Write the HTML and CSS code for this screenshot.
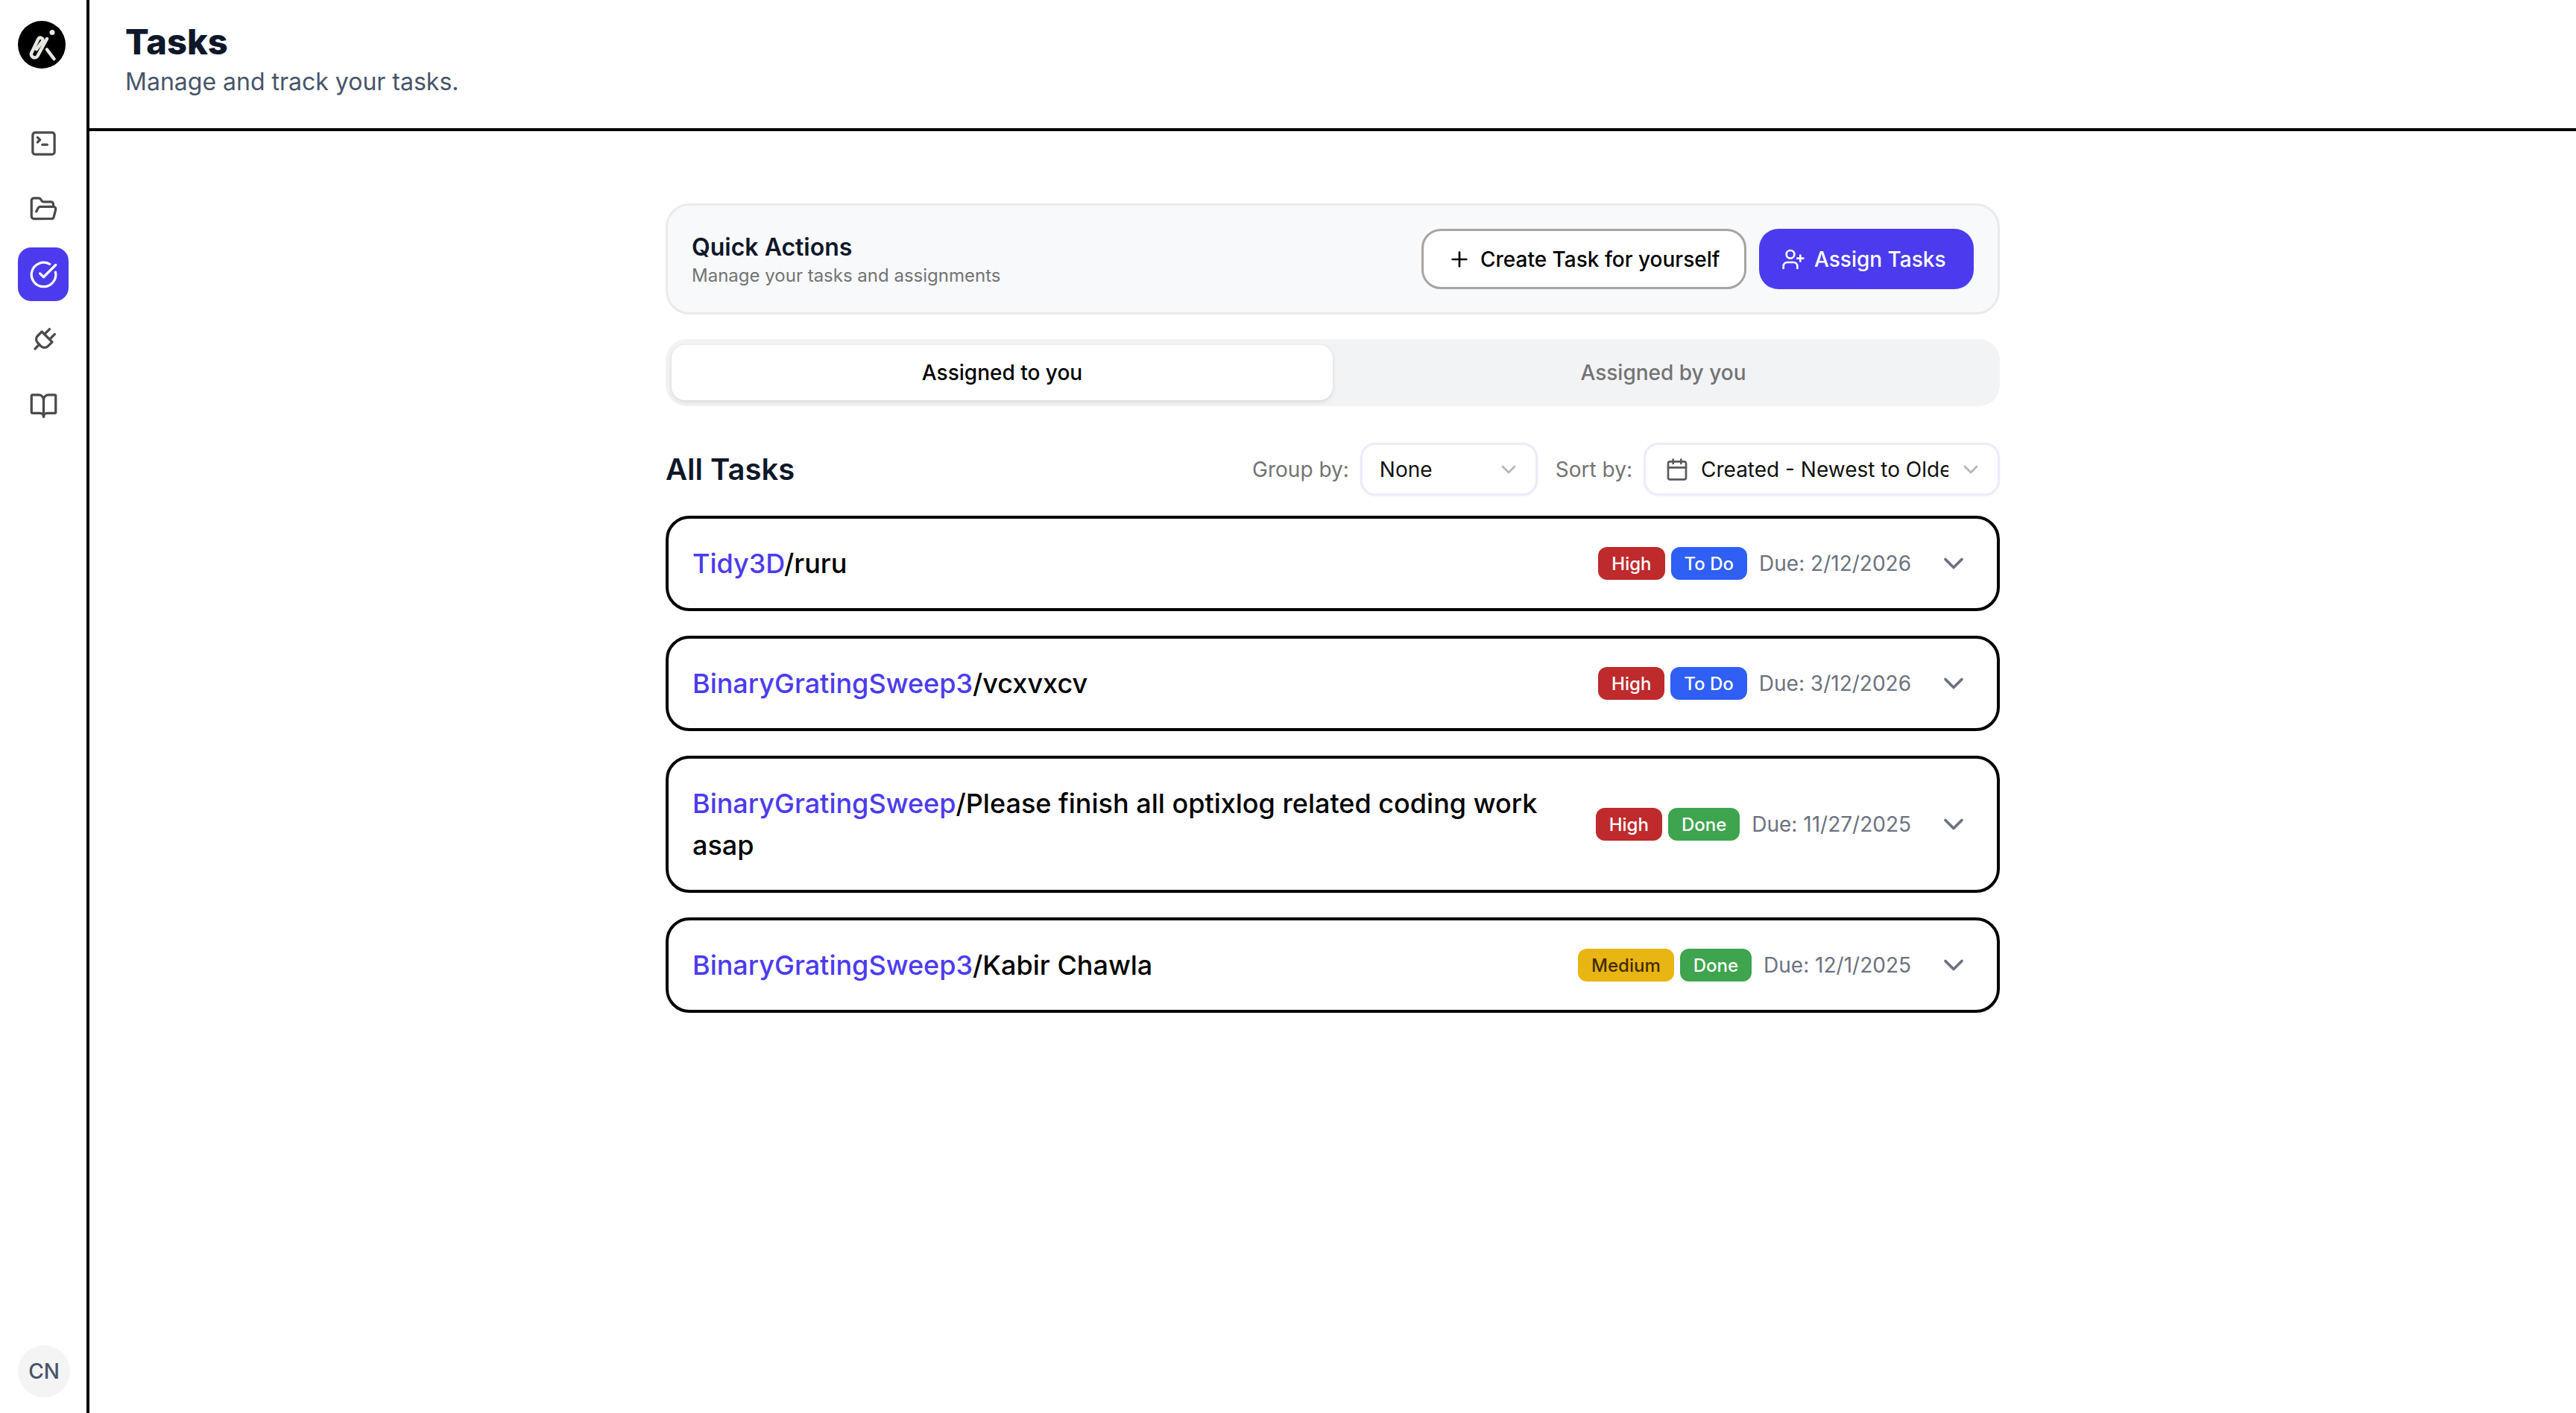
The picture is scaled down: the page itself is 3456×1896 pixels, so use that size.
FILE: index.html
```html
<!DOCTYPE html>
<html lang="en">
<head>
  <meta charset="UTF-8" />
  <meta name="viewport" content="width=device-width, initial-scale=1.0"/>
  <title>Tasks</title>
  <link rel="stylesheet" href="styles.css">
</head>
<body>
  <div class="app">
    <aside class="sidebar">
      <svg class="logo" viewBox="0 0 64 64">
        <circle cx="32" cy="32" r="32" fill="#000"/>
        <path d="M39 24 26.5 47a4.6 4.6 0 0 1-8-4.600L27.500 24a3.300 3.300 0 0 1 5.700 3.200L25 38" fill="none" stroke="#e8e6e1" stroke-width="4.500" stroke-linecap="round"/>
        <path d="M39 38.500 48.500 51" fill="none" stroke="#e8e6e1" stroke-width="4.500" stroke-linecap="round"/>
        <circle cx="46" cy="15.500" r="3.500" fill="#e8e6e1"/>
      </svg>
      <nav class="nav">
        <a class="nav-item">
          <svg class="icon-nav" viewBox="0 0 24 24"><path d="m7 11 2-2-2-2"/><path d="M11 13h4"/><rect x="3" y="3" width="18" height="18" rx="2"/></svg>
        </a>
        <a class="nav-item">
          <svg class="icon-nav" viewBox="0 0 24 24"><path d="m6 14 1.500-2.900A2 2 0 0 1 9.240 10H20a2 2 0 0 1 1.940 2.500l-1.540 6a2 2 0 0 1-1.950 1.500H4a2 2 0 0 1-2-2V5a2 2 0 0 1 2-2h3.900a2 2 0 0 1 1.690.9l.81 1.200a2 2 0 0 0 1.670.9H18a2 2 0 0 1 2 2v2"/></svg>
        </a>
        <a class="nav-item active">
          <svg class="icon-nav" viewBox="0 0 24 24"><path d="M21.801 10A10 10 0 1 1 17 3.335"/><path d="m9 11 3 3L22 4"/></svg>
        </a>
        <a class="nav-item">
          <svg class="icon-nav" viewBox="0 0 24 24"><g transform="rotate(45 12 12)"><path d="M12 22v-5"/><path d="M9 8V2"/><path d="M15 8V2"/><path d="M18 8v5a4 4 0 0 1-4 4h-4a4 4 0 0 1-4-4V8Z"/></g></svg>
        </a>
        <a class="nav-item">
          <svg class="icon-nav" viewBox="0 0 24 24"><path d="M12 7v14"/><path d="M3 18a1 1 0 0 1-1-1V4a1 1 0 0 1 1-1h5a4 4 0 0 1 4 4 4 4 0 0 1 4-4h5a1 1 0 0 1 1 1v13a1 1 0 0 1-1 1h-6a3 3 0 0 0-3 3 3 3 0 0 0-3-3z"/></svg>
        </a>
      </nav>
      <div class="avatar">CN</div>
    </aside>

    <div class="main">
      <header class="page-header">
        <h1 class="page-title">Tasks</h1>
        <p class="page-subtitle">Manage and track your tasks.</p>
      </header>

      <section class="content">
        <div class="quick-actions">
          <div>
            <div class="quick-title">Quick Actions</div>
            <div class="quick-sub">Manage your tasks and assignments</div>
          </div>
          <div class="quick-buttons">
            <button class="btn btn-outline">
              <svg class="icon-btn" viewBox="0 0 24 24"><path d="M5 12h14"/><path d="M12 5v14"/></svg>
              Create Task for yourself
            </button>
            <button class="btn btn-primary">
              <svg class="icon-btn" viewBox="0 0 24 24"><path d="M16 21v-2a4 4 0 0 0-4-4H6a4 4 0 0 0-4 4v2"/><circle cx="9" cy="7" r="4"/><path d="M19 8v6"/><path d="M22 11h-6"/></svg>
              Assign Tasks
            </button>
          </div>
        </div>

        <div class="tabs">
          <div class="tab active">Assigned to you</div>
          <div class="tab">Assigned by you</div>
        </div>

        <div class="list-head">
          <h2 class="list-title">All Tasks</h2>
          <div class="filters">
            <span class="filter-label">Group by:</span>
            <div class="select select-group">
              <span class="select-text">None</span>
              <svg class="icon-select" viewBox="0 0 24 24"><path d="m6 9 6 6 6-6"/></svg>
            </div>
            <span class="filter-label">Sort by:</span>
            <div class="select select-sort">
              <svg class="icon-calendar" viewBox="0 0 24 24"><path d="M8 2v4"/><path d="M16 2v4"/><rect x="3" y="4" width="18" height="18" rx="2"/><path d="M3 10h18"/></svg>
              <span class="select-text">Created - Newest to Oldest</span>
              <svg class="icon-select" viewBox="0 0 24 24"><path d="m6 9 6 6 6-6"/></svg>
            </div>
          </div>
        </div>

        <div class="task-list">
          <div class="task">
            <div class="task-name"><span class="project">Tidy3D</span>/ruru</div>
            <div class="task-meta">
              <span class="badge high">High</span>
              <span class="badge todo">To Do</span>
              <span class="due">Due: 2/12/2026</span>
              <svg class="icon-chevron" viewBox="0 0 24 24"><path d="m6 9 6 6 6-6"/></svg>
            </div>
          </div>
          <div class="task">
            <div class="task-name"><span class="project">BinaryGratingSweep3</span>/vcxvxcv</div>
            <div class="task-meta">
              <span class="badge high">High</span>
              <span class="badge todo">To Do</span>
              <span class="due">Due: 3/12/2026</span>
              <svg class="icon-chevron" viewBox="0 0 24 24"><path d="m6 9 6 6 6-6"/></svg>
            </div>
          </div>
          <div class="task">
            <div class="task-name"><span class="project">BinaryGratingSweep</span>/Please finish all optixlog related coding work asap</div>
            <div class="task-meta">
              <span class="badge high">High</span>
              <span class="badge done">Done</span>
              <span class="due">Due: 11/27/2025</span>
              <svg class="icon-chevron" viewBox="0 0 24 24"><path d="m6 9 6 6 6-6"/></svg>
            </div>
          </div>
          <div class="task">
            <div class="task-name"><span class="project">BinaryGratingSweep3</span>/Kabir Chawla</div>
            <div class="task-meta">
              <span class="badge medium">Medium</span>
              <span class="badge done">Done</span>
              <span class="due">Due: 12/1/2025</span>
              <svg class="icon-chevron" viewBox="0 0 24 24"><path d="m6 9 6 6 6-6"/></svg>
            </div>
          </div>
        </div>
      </section>
    </div>
  </div>
</body>
</html>
```

FILE: styles.css
```css
* {
  margin: 0;
  padding: 0;
  box-sizing: border-box;
  font-family: 'Inter', 'Noto Sans', sans-serif;
}

body {
  background: #fff;
  color: #000;
  overflow: hidden;
}

svg {
  fill: none;
  stroke: currentColor;
  stroke-width: 2;
  stroke-linecap: round;
  stroke-linejoin: round;
  flex-shrink: 0;
}

.app {
  display: flex;
  height: 1896px;
}

.sidebar {
  width: 120px;
  flex-shrink: 0;
  border-right: 4px solid #000;
  padding: 28px 0 21px 24px;
  display: flex;
  flex-direction: column;
}

.logo {
  width: 64px;
  height: 64px;
  stroke: none;
  stroke-width: 0;
}

.nav {
  margin-top: 64px;
  display: flex;
  flex-direction: column;
  gap: 16px;
  flex: 1;
}

.nav-item {
  width: 68px;
  height: 72px;
  display: flex;
  align-items: center;
  justify-content: center;
  border-radius: 18px;
  color: #4a4a4a;
}

.nav-item.active {
  background: #4c3bee;
  color: #fff;
}

.icon-nav {
  width: 39px;
  height: 39px;
}

.avatar {
  width: 70px;
  height: 70px;
  border-radius: 50%;
  background: #f4f4f5;
  color: #475569;
  font-size: 28px;
  font-weight: 500;
  display: flex;
  align-items: center;
  justify-content: center;
}

.main {
  flex: 1;
  min-width: 0;
}

.page-header {
  height: 176px;
  border-bottom: 4px solid #000;
  padding: 26px 0 0 48px;
}

.page-title {
  font-size: 47px;
  line-height: 60px;
  font-weight: 800;
  color: #0f172a;
}

.page-subtitle {
  font-size: 32px;
  line-height: 44px;
  margin-top: 2px;
  color: #475569;
}

.content {
  width: 1790px;
  margin: 97px auto 0;
}

.quick-actions {
  height: 149px;
  background: #f8f9fb;
  border: 3px solid #e9eaec;
  border-radius: 32px;
  padding: 0 32px;
  display: flex;
  align-items: center;
  justify-content: space-between;
}

.quick-title {
  font-size: 32px;
  line-height: 44px;
  font-weight: 600;
  color: #0f172a;
}

.quick-sub {
  font-size: 24px;
  line-height: 32px;
  color: #737373;
}

.quick-buttons {
  display: flex;
  gap: 17px;
}

.btn {
  height: 81px;
  border-radius: 26px;
  font-size: 28px;
  font-weight: 500;
  display: flex;
  align-items: center;
  gap: 12px;
}

.btn-outline {
  width: 436px;
  background: #fff;
  border: 3px solid #a8a4a0;
  color: #000;
  padding-left: 32px;
}

.btn-primary {
  width: 288px;
  background: #4c3bee;
  border: none;
  color: #fff;
  padding-left: 30px;
}

.icon-btn {
  width: 32px;
  height: 32px;
}

.tabs {
  height: 90px;
  margin-top: 33px;
  background: #f2f3f5;
  border-radius: 28px;
  padding: 8px;
  display: grid;
  grid-template-columns: 1fr 1fr;
}

.tab {
  display: flex;
  align-items: center;
  justify-content: center;
  border-radius: 18px;
  font-size: 28px;
  font-weight: 500;
  color: #737373;
}

.tab.active {
  background: #fff;
  color: #000;
  box-shadow: 0 2px 6px rgba(0, 0, 0, 0.12);
}

.list-head {
  margin-top: 49px;
  display: flex;
  align-items: center;
  justify-content: space-between;
}

.list-title {
  font-size: 40px;
  font-weight: 600;
  color: #0f172a;
}

.filters {
  display: flex;
  align-items: center;
}

.filter-label {
  font-size: 28px;
  color: #737373;
  margin-right: 15px;
}

.select {
  height: 71px;
  background: #fff;
  border: 3px solid #ecebfb;
  border-radius: 20px;
  box-shadow: 0 1px 3px rgba(0, 0, 0, 0.05);
  display: flex;
  align-items: center;
  font-size: 28px;
  color: #111;
}

.select-group {
  width: 238px;
  padding: 0 20px 0 23px;
  margin-right: 24px;
  justify-content: space-between;
}

.select-sort {
  width: 478px;
  padding: 0 20px 0 26px;
}

.select-sort .select-text {
  flex: 1;
  margin-left: 16px;
  margin-right: 14px;
  white-space: nowrap;
  overflow: hidden;
}

.icon-select {
  width: 32px;
  height: 32px;
  color: #b5b5b5;
}

.icon-calendar {
  width: 32px;
  height: 32px;
  color: #5a5a5a;
}

.task-list {
  margin-top: 27px;
  display: flex;
  flex-direction: column;
  gap: 33px;
}

.task {
  border: 4px solid #000;
  border-radius: 32px;
  padding: 32px 36px 32px 32px;
  display: flex;
  align-items: center;
  justify-content: space-between;
  gap: 56px;
}

.task-name {
  font-size: 36px;
  line-height: 56px;
  font-weight: 500;
  color: #000;
}

.project {
  color: #4c3bee;
}

.task-meta {
  display: flex;
  align-items: center;
  flex-shrink: 0;
}

.badge {
  height: 44px;
  padding: 0 18px;
  border-radius: 12px;
  font-size: 24px;
  font-weight: 500;
  color: #fff;
  display: flex;
  align-items: center;
  margin-right: 8px;
}

.badge.high {
  background: #bf2a2c;
}

.badge.todo {
  background: #2f5ff5;
}

.badge.done {
  background: #3ea44e;
}

.badge.medium {
  background: #e8b512;
  color: #3f2f05;
}

.due {
  font-size: 28px;
  color: #6b7280;
  margin-left: 8px;
  margin-right: 35px;
}

.icon-chevron {
  width: 44px;
  height: 44px;
  color: #6b7280;
}
```
